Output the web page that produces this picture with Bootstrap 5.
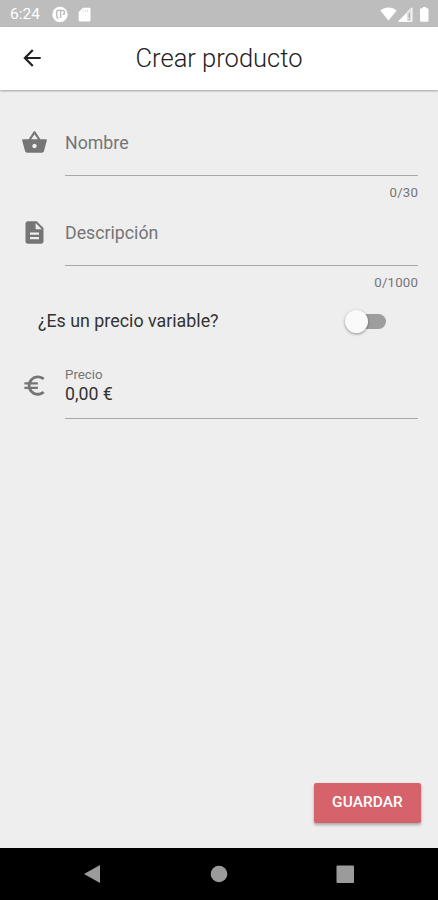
<!DOCTYPE html>
<html lang="es">
<head>
<meta charset="utf-8">
<meta name="viewport" content="width=device-width, initial-scale=1">
<title>Crear producto</title>
<link href="https://cdn.jsdelivr.net/npm/bootstrap@5.3.0/dist/css/bootstrap.min.css" rel="stylesheet">
<style>
body{font-family:Roboto,"Liberation Sans",sans-serif;background:#eee;color:#333;height:900px;overflow:hidden;line-height:20px}
svg{display:block;flex:none}
.status-bar{height:27px;background:#bdbdbd;color:#fff;font-size:15.5px;padding:1px 7px 0 10px}
.clock{width:42px}
.sd-card{margin-left:9px}
.app-bar{height:63px;padding:0 19px;box-shadow:0 1px 2px rgba(0,0,0,.32);display:grid;grid-template-columns:26px 1fr 26px}
.app-title{font-size:25.5px;font-weight:300;line-height:30px;color:#222;padding-bottom:1px}
.back-icon{margin-top:-1px}
.form-area{padding:0 20px}
.field-icon{width:45px;color:#757575;padding-left:1px}
.field-row{height:90px;padding-top:39px}
.field-line{height:47px;border-bottom:1px solid #a9a9a9;font-size:17.75px;color:#757575;padding-top:4px}
.counter{font-size:13.2px;line-height:16px;color:#757575;margin-top:9px;letter-spacing:.2px}
.switch-row{height:40px;padding:0 32px 0 18px;font-size:17.85px;margin-top:31px}
.switch-text{margin-top:-1px}
.toggle-track{width:37px;height:15px;border-radius:8px;background:#9d9d9d}
.toggle-knob{width:23px;height:23px;border-radius:50%;background:#fafafa;box-shadow:0 1px 3px rgba(0,0,0,.4);margin-left:-4px}
.price-row{margin-top:27px}
.price-line{height:51px;border-bottom:1px solid #a9a9a9;font-size:17.75px}
.price-label{font-size:13.3px;line-height:14px;color:#757575;margin-bottom:2px}
.save-btn,.save-btn:hover{width:107px;height:40px;margin:0 17px 25px 0;border-radius:2px;background:#d6626c;color:#fff;font-size:15.4px;font-weight:500;letter-spacing:.1px;padding:0;border:0;box-shadow:0 2px 3px rgba(0,0,0,.3)}
.nav-keys{height:52px;background:#000}
</style>
<script src="https://cdn.jsdelivr.net/npm/bootstrap@5.3.0/dist/js/bootstrap.bundle.min.js"></script>
</head>
<body class="d-flex flex-column m-0">
<div class="status-bar d-flex align-items-center flex-shrink-0">
  <span class="clock">6:24</span>
  <svg width="17" height="17" viewBox="0 0 17 17"><circle cx="8" cy="8.500" r="7.700" fill="#fff"/><path d="M8 4.200H6.500Q4.700 4.200 4.700 6v3.500q0 2 1.600 3M8.600 12V4.600h2.200a1.800 1.800 0 0 1 0 3.600" fill="none" stroke="#bdbdbd" stroke-width="1.500"/></svg>
  <svg class="sd-card" width="14" height="15" viewBox="0 0 14 15"><path d="M5 .7h6.200a1.300 1.300 0 0 1 1.300 1.300v11.200a1.300 1.300 0 0 1-1.300 1.300H2a1.300 1.300 0 0 1-1.300-1.300V5z" fill="#fff"/><path d="M5.200 2.800v2M7.400 2.800v2M9.600 2.800v2" stroke="#ddd"/></svg>
  <svg class="ms-auto" width="17" height="14" viewBox="0 0 17 14"><path d="M.3 3.400C5-.5 12-.5 16.700 3.400L8.500 13.500z" fill="#fff"/></svg>
  <svg width="16" height="15" viewBox="0 0 16 15"><path d="M15 .5V14.300H1.200z" fill="#fff" fill-opacity=".5"/><path d="M10 5.500V14.300H1.200z" fill="#fff"/><path d="M10 5.500 15 .8V14.300H1.500" fill="none" stroke="#fff"/><path d="M12.300 6v5M12.300 12v1.300" stroke="#aaa" stroke-width="1.200"/></svg>
  <svg class="ms-1" width="14" height="15" viewBox="0 0 14 15"><path d="M6 0h3v1.300h1.300q1.200 0 1.200 1.200v11q0 1.200-1.200 1.200H4.200Q3 14.700 3 13.500v-11q0-1.200 1.200-1.200H6z" fill="#fff"/></svg>
</div>
<header class="app-bar bg-white align-items-center flex-shrink-0">
  <svg class="back-icon" width="26" height="26" viewBox="0 0 24 24" fill="#222"><path d="M20 11H7.830l5.590-5.590L12 4l-8 8 8 8 1.410-1.410L7.830 13H20v-2z"/></svg>
  <h1 class="app-title text-center m-0">Crear producto</h1>
</header>
<main class="form-area flex-shrink-0">
  <div class="field-row d-flex">
    <div class="field-icon"><svg width="27" height="27" viewBox="0 0 24 24" fill="currentColor"><path d="M17.210 9l-4.380-6.560a.99.99 0 0 0-1.660.01L6.790 9H2c-.55 0-1 .45-1 1 0 .09.010.18.040.270l2.540 9.270c.23.840 1 1.460 1.920 1.460h13c.92 0 1.690-.62 1.930-1.460l2.540-9.270L23 10c0-.55-.45-1-1-1h-4.790zM9 9l3-4.400L15 9H9zm3 8c-1.100 0-2-.9-2-2s.9-2 2-2 2 .9 2 2-.9 2-2 2z"/></svg></div>
    <div class="flex-grow-1"><div class="field-line">Nombre</div><div class="counter text-end">0/30</div></div>
  </div>
  <div class="field-row d-flex">
    <div class="field-icon"><svg width="27" height="27" viewBox="0 0 24 24" fill="currentColor"><path d="M14 2H6c-1.100 0-1.990.9-1.990 2L4 20c0 1.100.89 2 1.990 2H18c1.100 0 2-.9 2-2V8l-6-6zm2 16H8v-2h8v2zm0-4H8v-2h8v2zm-3-5V3.500L18.500 9H13z"/></svg></div>
    <div class="flex-grow-1"><div class="field-line">Descripción</div><div class="counter text-end">0/1000</div></div>
  </div>
  <div class="switch-row d-flex align-items-center justify-content-between">
    <span class="switch-text">¿Es un precio variable?</span>
    <div class="toggle-track d-flex align-items-center" role="switch" aria-checked="false"><div class="toggle-knob flex-shrink-0"></div></div>
  </div>
  <div class="price-row d-flex">
    <div class="field-icon pt-1"><svg width="27" height="27" viewBox="0 0 24 24" fill="currentColor"><path d="M15 18.500c-2.510 0-4.680-1.420-5.760-3.500H15v-2H8.580c-.05-.33-.08-.66-.08-1s.03-.67.080-1H15V9H9.240C10.320 6.920 12.500 5.500 15 5.500c1.610 0 3.090.590 4.230 1.570L21 5.300C19.410 3.870 17.300 3 15 3c-3.920 0-7.240 2.510-8.480 6H3v2h3.060c-.04.330-.06.660-.06 1s.020.670.060 1H3v2h3.520c1.240 3.490 4.560 6 8.480 6 2.310 0 4.410-.87 6-2.300l-1.780-1.770c-1.130.980-2.600 1.570-4.220 1.570z"/></svg></div>
    <div class="price-line flex-grow-1"><div class="price-label">Precio</div><div>0,00 €</div></div>
  </div>
</main>
<button class="btn save-btn mt-auto align-self-end flex-shrink-0">GUARDAR</button>
<footer class="nav-keys flex-shrink-0">
  <svg width="438" height="52" viewBox="0 0 438 52" fill="#9b9b9b"><path d="M84 26 100 17V35z"/><circle cx="219" cy="26" r="8.300"/><rect x="336.500" y="17.500" width="17.500" height="17.500" rx="1"/></svg>
</footer>
</body>
</html>
